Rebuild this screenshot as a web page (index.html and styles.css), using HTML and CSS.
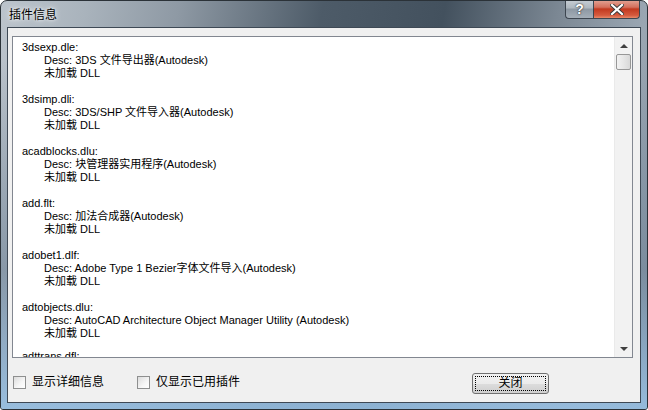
FILE: index.html
```html
<!DOCTYPE html>
<html>
<head>
<meta charset="utf-8">
<link rel="stylesheet" href="styles.css">
</head>
<body>
<div class="window">
  <div class="titlebar">
    <span class="title">插件信息</span>
    <div class="caption-btns">
      <div class="cbtn help">?</div>
      <div class="cbtn close"><svg width="14" height="11" viewBox="0 0 14 11"><path d="M2 1 L12 10 M12 1 L2 10" stroke="#3a3a3a" stroke-width="4" stroke-linecap="square"/><path d="M2 1 L12 10 M12 1 L2 10" stroke="#ffffff" stroke-width="2.2" stroke-linecap="square"/></svg></div>
    </div>
  </div>
  <div class="client">
    <div class="listbox">
      <div class="list">
        <div class="entry"><div>3dsexp.dle:</div><div class="ind">Desc: 3DS 文件导出器(Autodesk)</div><div class="ind">未加载 DLL</div></div>
        <div class="entry"><div>3dsimp.dli:</div><div class="ind">Desc: 3DS/SHP 文件导入器(Autodesk)</div><div class="ind">未加载 DLL</div></div>
        <div class="entry"><div>acadblocks.dlu:</div><div class="ind">Desc: 块管理器实用程序(Autodesk)</div><div class="ind">未加载 DLL</div></div>
        <div class="entry"><div>add.flt:</div><div class="ind">Desc: 加法合成器(Autodesk)</div><div class="ind">未加载 DLL</div></div>
        <div class="entry"><div>adobet1.dlf:</div><div class="ind">Desc: Adobe Type 1 Bezier字体文件导入(Autodesk)</div><div class="ind">未加载 DLL</div></div>
        <div class="entry"><div>adtobjects.dlu:</div><div class="ind">Desc: AutoCAD Architecture Object Manager Utility (Autodesk)</div><div class="ind">未加载 DLL</div></div>
        <div class="entry last"><div>adttrans.dfl:</div></div>
      </div>
      <div class="scrollbar">
        <div class="arrow up"></div>
        <div class="thumb"></div>
        <div class="track"></div>
        <div class="arrow down"></div>
      </div>
    </div>
    <div class="footer">
      <label class="check"><span class="box"></span>显示详细信息</label>
      <label class="check second"><span class="box"></span>仅显示已用插件</label>
      <div class="spacer"></div>
      <div class="button"><span class="focus">关闭</span></div>
    </div>
  </div>
</div>
</body>
</html>
```

FILE: styles.css
```css
html, body {
  margin: 0;
  padding: 0;
  background: #ffffff;
}
body {
  width: 648px;
  height: 410px;
  overflow: hidden;
  font-family: "Liberation Sans", "Noto Sans CJK SC", sans-serif;
  font-size: 11px;
  color: #000;
}
.window {
  width: 648px;
  height: 410px;
  box-sizing: border-box;
  border: 1px solid #2b3238;
  border-radius: 7px 7px 3px 3px;
  background:
    linear-gradient(100deg, #bcc4cc 0%, #a9b3bc 12%, #8e99a4 25%, #4d5b68 45%, #43515e 62%, #7c8894 78%, #9aa6b2 90%, #8a98a6 100%);
  display: flex;
  flex-direction: column;
  padding: 0 6px 6px 6px;
  position: relative;
  overflow: hidden;
}
.window::after {
  content: "";
  position: absolute;
  left: 0; right: 0; top: 60px; bottom: 0;
  background: linear-gradient(180deg, rgba(140,150,160,0) 0%, rgba(110,130,150,0.6) 60%, rgba(150,190,225,0.9) 100%);
  pointer-events: none;
  z-index: 0;
}
.titlebar {
  height: 26px;
  display: flex;
  align-items: flex-start;
  position: relative;
  z-index: 1;
}
.title {
  margin: 4px 0 0 2px;
  font-size: 12px;
  color: #000;
  text-shadow: 0 0 6px rgba(255,255,255,0.9), 0 0 3px rgba(255,255,255,0.8);
}
.caption-btns {
  margin-left: auto;
  display: flex;
  margin-top: -1px;
  margin-right: 1px;
}
.cbtn {
  height: 19px;
  border: 1px solid #3d4650;
  border-top: none;
  display: flex;
  align-items: center;
  justify-content: center;
  box-sizing: border-box;
}
.help {
  width: 28px;
  border-radius: 0 0 0 4px;
  background: linear-gradient(180deg, #c7ced5 0%, #aeb7bf 45%, #8d98a3 50%, #a4aeb8 100%);
  color: #fff;
  font-weight: bold;
  font-family: "Liberation Sans", sans-serif;
  font-size: 14px;
  text-shadow: 0 0 2px #333, 0 0 1px #333;
  border-right: none;
}
.close {
  width: 47px;
  border-radius: 0 0 4px 0;
  background: linear-gradient(180deg, #e3a596 0%, #d4705d 40%, #c2391f 50%, #d55a3e 85%, #e88a6a 100%);
}
.client {
  flex: 1;
  background: #f0f0f0;
  border: 1px solid #3e4955;
  display: flex;
  flex-direction: column;
  padding: 8px 7px 0 4px;
  position: relative;
  z-index: 1;
}
.listbox {
  height: 322px;
  flex: none;
  box-sizing: border-box;
  border: 1px solid #828790;
  background: #fff;
  display: flex;
  overflow: hidden;
}
.list {
  flex: 1;
  padding: 4px 0 0 9px;
  line-height: 13px;
  overflow: hidden;
}
.entry {
  margin-bottom: 13px;
}
.entry.last {
  margin-top: -3px;
}
.ind {
  padding-left: 22px;
}
.scrollbar {
  width: 17px;
  background: #f2f2f2;
  border-left: 1px solid #eaeaea;
  display: flex;
  flex-direction: column;
  align-items: center;
}
.arrow {
  height: 17px;
  width: 17px;
  display: flex;
  align-items: center;
  justify-content: center;
}
.arrow::before {
  content: "";
  width: 0; height: 0;
  border-left: 4px solid transparent;
  border-right: 4px solid transparent;
}
.up::before { border-bottom: 4px solid #404040; }
.down::before { border-top: 4px solid #404040; }
.thumb {
  width: 15px;
  height: 16px;
  box-sizing: border-box;
  border: 1px solid #979797;
  border-radius: 2px;
  background: linear-gradient(90deg, #f2f2f2 0%, #e6e6e6 50%, #d8d8d8 100%);
}
.track { flex: 1; }
.footer {
  display: flex;
  align-items: center;
  height: 32px;
  padding-top: 8px;
  padding-left: 1px;
  padding-right: 84px;
}
.check {
  display: flex;
  align-items: center;
  font-size: 12px;
  line-height: 14px;
}
.box {
  width: 11px;
  height: 11px;
  border: 1px solid #8e8f8f;
  background: linear-gradient(135deg, #dcdcdc 0%, #f6f6f6 60%, #fff 100%);
  margin-right: 6px;
  flex: none;
}
.second {
  margin-left: 33px;
}
.spacer { flex: 1; }
.button {
  width: 77px;
  height: 21px;
  box-sizing: border-box;
  border: 1px solid #707070;
  border-radius: 3px;
  background: linear-gradient(180deg, #f2f2f2 0%, #ebebeb 50%, #dddddd 51%, #cfcfcf 100%);
  display: flex;
  padding: 2px;
  margin-top: 3px;
}
.focus {
  flex: 1;
  border: 1px dotted #000;
  display: flex;
  align-items: center;
  justify-content: center;
  font-size: 12px;
  line-height: 13px;
}
```
